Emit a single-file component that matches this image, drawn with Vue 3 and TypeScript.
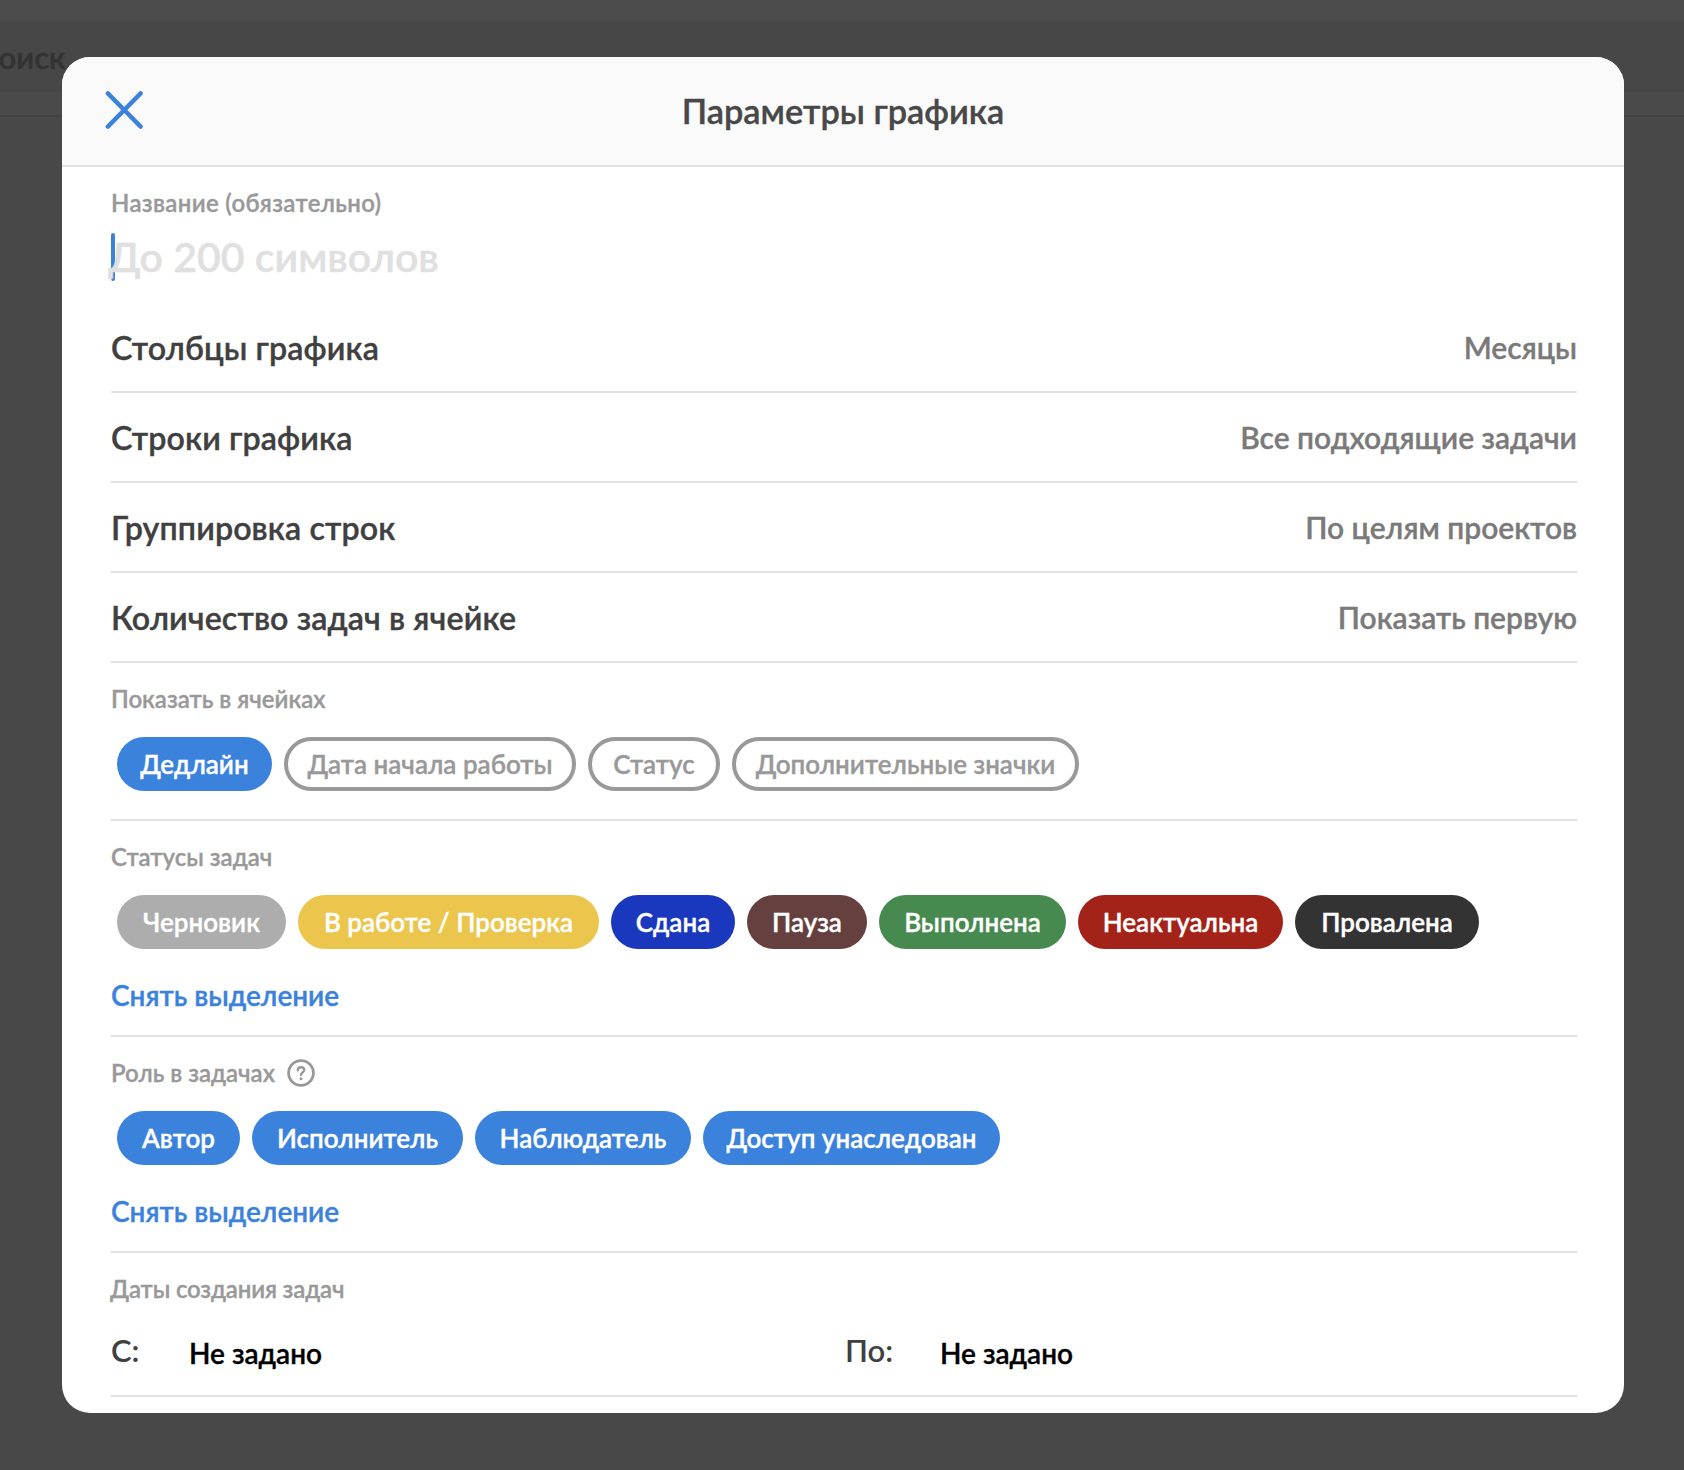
<script setup lang="ts">
interface Chip { text: string; w: number; cls?: string; color?: string }
const rows: [string, string][] = [
  ['Столбцы графика', 'Месяцы'],
  ['Строки графика', 'Все подходящие задачи'],
  ['Группировка строк', 'По целям проектов'],
  ['Количество задач в ячейке', 'Показать первую'],
]
const cellChips: Chip[] = [
  { text: 'Дедлайн', w: 155, color: '#3b82dc' },
  { text: 'Дата начала работы', w: 292, cls: 'off' },
  { text: 'Статус', w: 132, cls: 'off' },
  { text: 'Дополнительные значки', w: 347, cls: 'off' },
]
const statusChips: Chip[] = [
  { text: 'Черновик', w: 169, color: '#adadad' },
  { text: 'В работе / Проверка', w: 301, color: '#ecc54c' },
  { text: 'Сдана', w: 124, color: '#1a38be' },
  { text: 'Пауза', w: 120, color: '#663f3f' },
  { text: 'Выполнена', w: 187, color: '#478a50' },
  { text: 'Неактуальна', w: 205, color: '#a32318' },
  { text: 'Провалена', w: 184, color: '#333333' },
]
const roleChips: Chip[] = [
  { text: 'Автор', w: 123, color: '#3b82dc' },
  { text: 'Исполнитель', w: 211, color: '#3b82dc' },
  { text: 'Наблюдатель', w: 216, color: '#3b82dc' },
  { text: 'Доступ унаследован', w: 297, color: '#3b82dc' },
]
</script>

<template>
  <div class="page">
    <div class="behind">
      <span class="search">поиск</span>
    </div>
    <section class="modal">
      <header class="head">
        <svg class="close" width="38" height="38" viewBox="0 0 38 38" fill="none">
          <path d="M3 2.5L35.5 35.5M35.5 2.5L3 35.5" stroke="#3b82dc" stroke-width="4.6" stroke-linecap="round" />
        </svg>
        <h1 class="title">Параметры графика</h1>
      </header>
      <div class="body">
        <div class="name">
          <div class="label name-label">Название (обязательно)</div>
          <div class="input"><span class="caret"></span><span class="placeholder">До 200 символов</span></div>
        </div>
        <div v-for="r in rows" :key="r[0]" class="row">
          <span class="row-label">{{ r[0] }}</span>
          <span class="row-value">{{ r[1] }}</span>
        </div>
        <div class="sec sec-cells">
          <div class="label">Показать в ячейках</div>
          <div class="chips">
            <span v-for="c in cellChips" :key="c.text" class="chip" :class="c.cls" :style="{ width: c.w + 'px', background: c.color }">{{ c.text }}</span>
          </div>
        </div>
        <div class="sec sec-status">
          <div class="label">Статусы задач</div>
          <div class="chips">
            <span v-for="c in statusChips" :key="c.text" class="chip" :style="{ width: c.w + 'px', background: c.color }">{{ c.text }}</span>
          </div>
          <div class="link">Снять выделение</div>
        </div>
        <div class="sec sec-status">
          <div class="label with-help">Роль в задачах
            <svg class="help" width="28" height="28" viewBox="0 0 28 28" fill="none">
              <circle cx="14" cy="14" r="12.4" stroke="#999" stroke-width="2.8" />
              <path d="M10.8 11.2c0-1.9 1.4-3 3.2-3s3.2 1.1 3.2 2.8c0 2.5-3.2 2.6-3.2 4.9" stroke="#999" stroke-width="2.4" stroke-linecap="round" />
              <circle cx="14" cy="19.8" r="1.5" fill="#999" />
            </svg>
          </div>
          <div class="chips">
            <span v-for="c in roleChips" :key="c.text" class="chip" :style="{ width: c.w + 'px', background: c.color }">{{ c.text }}</span>
          </div>
          <div class="link">Снять выделение</div>
        </div>
        <div class="sec sec-dates">
          <div class="label dates-label">Даты создания задач</div>
          <div class="dates">
            <div class="date date-from"><span class="date-key">С:</span><span class="date-val">Не задано</span></div>
            <div class="date"><span class="date-key key-to">По:</span><span class="date-val">Не задано</span></div>
          </div>
        </div>
      </div>
    </section>
  </div>
</template>

<style>
body { margin: 0; background: #484848; }
</style>

<style scoped>
.page {
  width: 1684px;
  height: 1470px;
  position: relative;
  overflow: hidden;
  background: #484848;
  font-family: "Lato", "Noto Sans", sans-serif;
  font-weight: 600;
  -webkit-text-stroke: 0.35px;
}
.behind {
  height: 115px;
  border-bottom: 2px solid #414141;
  background: linear-gradient(#4b4b4b 0 22px, #474747 22px 92px, #4a4a4a 92px);
}
.search {
  position: absolute;
  left: -19px;
  top: 38px;
  font-size: 31px;
  color: #333;
}
.modal {
  position: absolute;
  left: 62px;
  top: 57px;
  width: 1562px;
  height: 1356px;
  background: #fff;
  border-radius: 28px;
  overflow: hidden;
}
.head {
  height: 110px;
  box-sizing: border-box;
  padding-bottom: 2px;
  background: #fafafa;
  border-bottom: 2px solid #e0e0e0;
  display: flex;
  align-items: center;
  justify-content: center;
  position: relative;
}
.close { position: absolute; left: 43px; top: 34px; }
.title {
  margin: 0;
  font-size: 34.3px;
  font-weight: 600;
  color: #484848;
}
.body { padding: 0 47px 0 49px; }
.label { font-size: 24px; color: #999; line-height: 28px; }
.name-label { letter-spacing: 0.35px; }
.name { height: 136px; box-sizing: border-box; padding-top: 22px; }
.input { position: relative; margin-top: 16px; height: 50px; }
.caret {
  position: absolute;
  left: 0;
  top: 0;
  width: 4px;
  height: 48px;
  border-radius: 2px;
  background: #3b82dc;
}
.placeholder { font-size: 41px; line-height: 48px; color: #e0e0e0; margin-left: -3px; position: relative; }
.row {
  height: 90px;
  box-sizing: border-box;
  border-bottom: 2px solid #e0e0e0;
  display: flex;
  justify-content: space-between;
  align-items: center;
}
.row-label { font-size: 32.2px; color: #404040; letter-spacing: 0.1px; }
.row-value { font-size: 30px; color: #7a7a7a; }
.sec { box-sizing: border-box; border-bottom: 2px solid #e0e0e0; padding-top: 22px; }
.sec-cells { height: 158px; }
.sec-status { height: 216px; }
.sec-dates { height: 144px; }
.chips { display: flex; gap: 12px; margin-top: 24px; padding-left: 6px; }
.chip {
  height: 54px;
  box-sizing: border-box;
  border-radius: 27px;
  display: flex;
  align-items: center;
  justify-content: center;
  font-size: 26px;
  color: #fff;
  white-space: nowrap;
}
.chip.off { background: #fff; border: 4px solid #999; color: #999; }
.link { margin-top: 29px; font-size: 28px; line-height: 34px; color: #3b82dc; }
.with-help { display: flex; align-items: center; gap: 12px; }
.dates-label { margin-left: -1px; letter-spacing: -0.15px; }
.dates { display: flex; margin-top: 33px; }
.date { display: flex; align-items: center; }
.date-from { width: 734px; }
.date-key { font-size: 31px; color: #404040; width: 78px; margin-top: -6px; -webkit-text-stroke: 0; }
.key-to { width: 95px; }
.date-val { font-size: 28px; color: #000; }
</style>
